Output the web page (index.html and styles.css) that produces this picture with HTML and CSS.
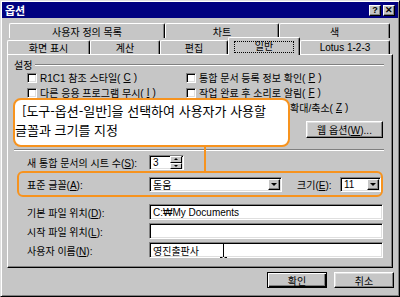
FILE: index.html
```html
<!DOCTYPE html>
<html lang="ko">
<head>
    <meta charset="UTF-8">
    <title>옵션</title>
    <link rel="stylesheet" href="styles.css">
</head>
<body>
    <div class="window">
        <div class="titlebar">
            <span class="title">옵션</span>
            <div class="title-buttons">
                <span class="tbtn">?</span>
                <span class="tbtn">&#x2715;</span>
            </div>
        </div>

        <div class="tab-row back">
            <div class="tab w-custom">사용자 정의 목록</div>
            <div class="tab w-chart">차트</div>
            <div class="tab w-color">색</div>
        </div>
        <div class="tab-row front">
            <div class="tab w-view">화면 표시</div>
            <div class="tab w-calc">계산</div>
            <div class="tab w-edit">편집</div>
            <div class="tab w-general selected"><span class="focus">일반</span></div>
            <div class="tab w-lotus">Lotus 1-2-3</div>
        </div>

        <div class="panel">
            <div class="section-head">
                <span>설정</span>
                <div class="etch"></div>
            </div>
            <div class="checks">
                <div class="check"><span class="box"></span>R1C1 참조 스타일(<u>C</u>)</div>
                <div class="check"><span class="box"></span>통합 문서 등록 정보 확인(<u>P</u>)</div>
                <div class="check"><span class="box"></span>다른 응용 프로그램 무시(<u>I</u>)</div>
                <div class="check"><span class="box"></span>작업 완료 후 소리로 알림(<u>F</u>)</div>
                <div class="check"></div>
                <div class="check"><span class="hidden-part"></span>확대/축소(<u>Z</u>)</div>
            </div>
            <div class="web-row">
                <button class="btn web">웹 옵션(<u>W</u>)...</button>
            </div>
            <div class="etch sep"></div>

            <div class="row first">
                <span class="label">새 통합 문서의 시트 수(<u>S</u>):</span>
                <div class="field spin">
                    <span class="value">3</span>
                    <div class="spin-btns">
                        <span class="spin-btn"><i class="arrow up"></i></span>
                        <span class="spin-btn"><i class="arrow down"></i></span>
                    </div>
                </div>
            </div>

            <div class="row highlight">
                <span class="label">표준 글꼴(<u>A</u>):</span>
                <div class="field combo font">
                    <span class="value">돋움</span>
                    <span class="drop"><i class="arrow down"></i></span>
                </div>
                <span class="size-label">크기(<u>E</u>):</span>
                <div class="field combo size">
                    <span class="value">11</span>
                    <span class="drop"><i class="arrow down"></i></span>
                </div>
            </div>

            <div class="row path">
                <span class="label">기본 파일 위치(<u>D</u>):</span>
                <div class="field text"><span class="value">C:₩My Documents</span></div>
            </div>
            <div class="row path">
                <span class="label">시작 파일 위치(<u>L</u>):</span>
                <div class="field text"></div>
            </div>
            <div class="row path">
                <span class="label">사용자 이름(<u>N</u>):</span>
                <div class="field text">
                    <span class="value">영진출판사</span>
                    <svg class="ibeam" width="7" height="15" viewBox="0 0 7 15">
                        <path d="M0 0.5h2.5M4.5 0.5H7M3.5 1v13M0 14.5h2.5M4.5 14.5H7" stroke="#000" stroke-width="1" fill="none"/>
                    </svg>
                </div>
            </div>
        </div>

        <div class="actions">
            <button class="btn default">확인</button>
            <button class="btn">취소</button>
        </div>

        <div class="callout">[도구-옵션-일반]을 선택하여 사용자가 사용할<br>글꼴과 크기를 지정</div>
        <div class="connector"></div>
    </div>
</body>
</html>
```

FILE: styles.css
```css
* {
    box-sizing: border-box;
}
body {
    margin: 0;
    background: #c6c6c6;
    font-family: "Liberation Sans", "Noto Sans CJK KR", sans-serif;
    font-size: 10px;
    color: #000;
}
u {
    text-decoration: underline;
    text-underline-offset: 1px;
}
.window {
    position: relative;
    width: 400px;
    height: 297px;
    background: #c6c6c6;
    border: 1px solid;
    border-color: #dfdfdf #000 #000 #dfdfdf;
    box-shadow: inset 1px 1px #fff, inset -1px -1px #808080;
    padding: 1px;
}
.titlebar {
    height: 16px;
    background: #000080;
    display: flex;
    align-items: center;
    justify-content: space-between;
    padding: 0 3px 0 3px;
}
.title {
    color: #fff;
    font-weight: bold;
    font-size: 11px;
}
.title-buttons {
    display: flex;
    gap: 2px;
}
.tbtn {
    width: 12px;
    height: 11px;
    background: #c6c6c6;
    border: 1px solid;
    border-color: #fff #000 #000 #fff;
    box-shadow: inset -1px -1px #808080;
    font-size: 9px;
    font-weight: bold;
    line-height: 9px;
    display: flex;
    align-items: center;
    justify-content: center;
}

/* tabs */
.tab-row {
    display: flex;
}
.tab-row.back {
    margin-top: 5px;
    height: 15px;
    padding-left: 7px;
}
.tab-row.front {
    height: 16px;
    padding-left: 5px;
    align-items: flex-end;
}
.tab {
    height: 15px;
    background: #c6c6c6;
    border-top: 1px solid #fff;
    border-left: 1px solid #fff;
    border-right: 1px solid #000;
    box-shadow: inset -1px 0 #808080;
    border-radius: 2px 2px 0 0;
    display: flex;
    align-items: center;
    justify-content: center;
}
.tab-row.front .tab {
    height: 14px;
}
.tab-row.front .tab.selected {
    position: relative;
    z-index: 1;
    height: 18px;
    margin-bottom: -1px;
}
.focus {
    border: 1px dotted #000;
    padding: 0 20px;
    line-height: 10px;
}
.w-custom { width: 156px; }
.w-chart { width: 114px; }
.w-color { width: 111px; }
.w-view { width: 83px; }
.w-calc { width: 70px; }
.w-edit { width: 68px; }
.w-general { width: 72px; }
.w-lotus { width: 90px; }

/* panel */
.panel {
    margin-left: 5px;
    width: 386px;
    height: 214px;
    border: 1px solid;
    border-color: #fff #000 #000 #fff;
    box-shadow: inset -1px -1px #808080;
}
.section-head {
    display: flex;
    align-items: center;
    height: 11px;
    margin: 4px 8px 0 6px;
}
.etch {
    border-top: 1px solid #808080;
    border-bottom: 1px solid #fff;
}
.section-head .etch {
    flex: 1;
    margin-left: 3px;
}
.checks {
    display: grid;
    grid-template-columns: 159px 1fr;
    grid-auto-rows: 15px;
    padding-left: 19px;
}
.check {
    display: flex;
    align-items: center;
    gap: 3px;
    white-space: nowrap;
}
.box {
    width: 10px;
    height: 10px;
    background: #fff;
    border: 1px solid;
    border-color: #808080 #fff #fff #808080;
    box-shadow: inset 1px 1px #000, inset -1px -1px #dfdfdf;
}
.hidden-part {
    display: inline-block;
    width: 101px;
}
.web-row {
    display: flex;
    justify-content: flex-end;
    margin-top: 6px;
    padding-right: 9px;
}
.btn {
    background: #c6c6c6;
    border: 1px solid;
    border-color: #fff #000 #000 #fff;
    box-shadow: inset -1px -1px #808080, inset 1px 1px #dfdfdf;
    font-family: inherit;
    font-size: 10px;
    color: #000;
    padding: 0;
}
.btn.web {
    width: 77px;
    height: 17px;
}
.sep {
    margin: 11px 8px 0 6px;
}

.row {
    display: flex;
    align-items: center;
    height: 15px;
    padding-left: 19px;
    white-space: nowrap;
}
.row.first {
    margin-top: 4px;
}
.label {
    width: 122px;
}
.field {
    height: 15px;
    background: #fff;
    border: 1px solid;
    border-color: #808080 #fff #fff #808080;
    box-shadow: inset 1px 1px #000, inset -1px -1px #dfdfdf;
    display: flex;
    align-items: center;
    position: relative;
}
.value {
    padding-left: 3px;
    flex: 1;
}
.spin {
    width: 35px;
}
.spin-btns {
    width: 12px;
    height: 13px;
    margin-right: 1px;
    display: flex;
    flex-direction: column;
}
.spin-btn {
    flex: 1;
    background: #c6c6c6;
    border: 1px solid;
    border-color: #fff #000 #000 #fff;
    display: flex;
    align-items: center;
    justify-content: center;
}
.arrow {
    width: 0;
    height: 0;
    border-left: 2px solid transparent;
    border-right: 2px solid transparent;
}
.arrow.up {
    border-bottom: 2px solid #000;
}
.arrow.down {
    border-top: 2px solid #000;
}
.drop .arrow {
    border-left-width: 3px;
    border-right-width: 3px;
    border-top-width: 3px;
}

.row.highlight {
    height: 26px;
    margin: 1px 9px 0 9px;
    padding-left: 8px;
    border: 2px solid #f7931e;
    border-radius: 6px;
}
.combo.font {
    width: 133px;
}
.combo.size {
    width: 41px;
}
.drop {
    width: 12px;
    height: 11px;
    margin-right: 1px;
    background: #c6c6c6;
    border: 1px solid;
    border-color: #fff #000 #000 #fff;
    box-shadow: inset -1px -1px #808080;
    display: flex;
    align-items: center;
    justify-content: center;
}
.size-label {
    margin-left: 15px;
    width: 43px;
}
.row.path {
    height: 16px;
    margin-top: 3px;
}
.highlight + .row.path {
    margin-top: 7px;
}
.text {
    width: 234px;
    height: 16px;
}
.text .value {
    flex: none;
}
.ibeam {
    position: absolute;
    left: 70px;
    top: 0;
}

.actions {
    display: flex;
    justify-content: flex-end;
    gap: 7px;
    margin-top: 4px;
    padding-right: 4px;
}
.actions .btn {
    width: 60px;
    height: 16px;
}
.btn.default {
    border-color: #000;
    box-shadow: inset 1px 1px #fff, inset -1px -1px #000, inset -2px -2px #808080;
}

/* annotation */
.callout {
    position: absolute;
    left: 12px;
    top: 97px;
    width: 277px;
    height: 49px;
    background: #fff;
    border: 2px solid #f7931e;
    border-radius: 8px;
    font-family: "Noto Sans CJK KR", sans-serif;
    font-size: 13px;
    line-height: 19px;
    padding: 1px 0 0 0;
    text-indent: 7px;
    white-space: nowrap;
}
.connector {
    position: absolute;
    left: 203px;
    top: 145px;
    width: 2px;
    height: 26px;
    background: #f7931e;
}
```
